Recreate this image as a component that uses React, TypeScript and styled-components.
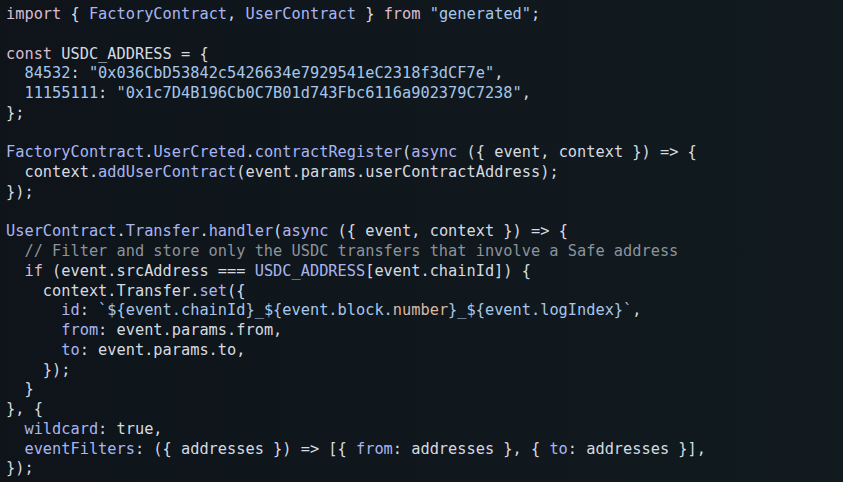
import React from "react";
import styled, { createGlobalStyle } from "styled-components";

const Global = createGlobalStyle`
  html, body { margin: 0; padding: 0; background: #10171c; }
  #root { width: 843px; height: 482px; }
`;

type Kind = "t" | "k" | "f" | "s" | "c" | "n" | "a";

const colors: Record<Kind, string> = {
  t: "#d6dbe1",
  k: "#dcbcd2",
  f: "#a9b5f2",
  s: "#a7c6ea",
  c: "#8c939b",
  n: "#dcb7a0",
  a: "#b2b2f0",
};

const Frame = styled.div`
  width: 843px;
  height: 482px;
  box-sizing: border-box;
  padding: 5px 6px 0 6px;
  background: linear-gradient(90deg, #0e141a 0%, #10181d 55%, #111a1f 100%);
  overflow: hidden;
`;

const Code = styled.pre`
  margin: 0;
  font-family: "DejaVu Sans Mono", "Liberation Mono", monospace;
  font-size: 15.3px;
  line-height: 19.75px;
  color: ${colors.t};
  white-space: pre;
  display: flex;
  flex-direction: column;
`;

const Line = styled.div`
  height: 19.75px;
`;

const Tok = styled.span<{ $k: Kind }>`
  color: ${(p) => colors[p.$k]};
`;

type Seg = [Kind, string];
const T = (s: string): Seg => ["t", s];
const K = (s: string): Seg => ["k", s];
const F = (s: string): Seg => ["f", s];
const S = (s: string): Seg => ["s", s];
const C = (s: string): Seg => ["c", s];
const N = (s: string): Seg => ["n", s];
const A = (s: string): Seg => ["a", s];

const lines: Seg[][] = [
  [K("import"), T(" { "), F("FactoryContract"), T(", "), F("UserContract"), T(" } "), K("from"), T(" "), S('"generated"'), T(";")],
  [],
  [K("const"), T(" USDC_ADDRESS = {")],
  [T("  "), S("84532"), T(": "), S('"0x036CbD53842c5426634e7929541eC2318f3dCF7e"'), T(",")],
  [T("  "), S("11155111"), T(": "), S('"0x1c7D4B196Cb0C7B01d743Fbc6116a902379C7238"'), T(",")],
  [T("};")],
  [],
  [F("FactoryContract"), T("."), F("UserCreted"), T("."), F("contractRegister"), T("("), A("async"), T(" ({ event, context }) => {")],
  [T("  context."), F("addUserContract"), T("(event.params.userContractAddress);")],
  [T("});")],
  [],
  [F("UserContract"), T("."), F("Transfer"), T("."), F("handler"), T("("), A("async"), T(" ({ event, context }) => {")],
  [T("  "), C("// Filter and store only the USDC transfers that involve a Safe address")],
  [T("  "), K("if"), T(" (event.srcAddress === "), F("USDC_ADDRESS"), T("[event.chainId]) {")],
  [T("    context.Transfer."), F("set"), T("({")],
  [T("      "), F("id"), T(": "), S("`${event.chainId}_${event.block."), N("number"), S("}_${event.logIndex}`"), T(",")],
  [T("      "), F("from"), T(": event.params.from,")],
  [T("      "), F("to"), T(": event.params.to,")],
  [T("    });")],
  [T("  }")],
  [T("}, {")],
  [T("  "), F("wildcard"), T(": true,")],
  [T("  "), F("eventFilters"), T(": ({ addresses }) => [{ "), F("from"), T(": addresses }, { "), F("to"), T(": addresses }],")],
  [T("});")],
];

export default function App() {
  return (
    <>
      <Global />
      <Frame>
        <Code>
          {lines.map((segs, i) => (
            <Line key={i}>
              {segs.length === 0
                ? " "
                : segs.map(([k, s], j) => (
                    <Tok key={j} $k={k}>
                      {s}
                    </Tok>
                  ))}
            </Line>
          ))}
        </Code>
      </Frame>
    </>
  );
}
